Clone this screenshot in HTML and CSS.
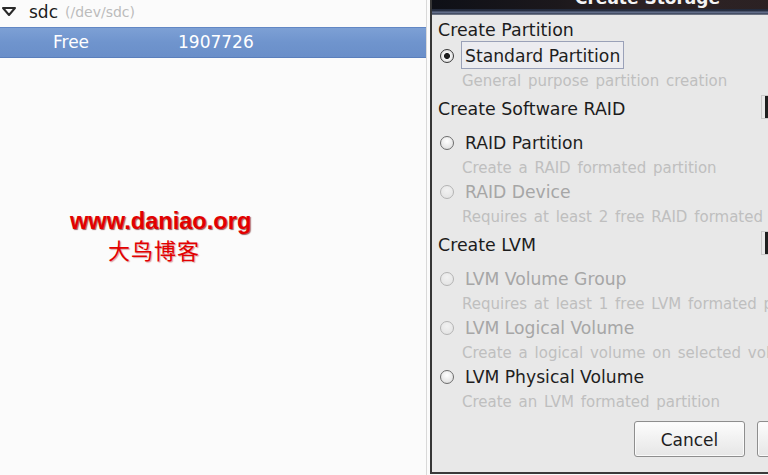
FILE: index.html
```html
<!DOCTYPE html>
<html>
<head>
<meta charset="utf-8">
<link rel="stylesheet" href="styles.css">
</head>
<body>
<div class="screen">
  <div class="tree">
    <div class="tree-list">
      <div class="row row-disk">
        <svg class="expander" width="14" height="9" viewBox="0 0 14 9"><polygon points="1,1 13,1 7,8" fill="#fff" stroke="#2a2a2a" stroke-width="2" stroke-linejoin="round"/></svg>
        <span class="disk">sdc</span><span class="path">(/dev/sdc)</span>
      </div>
      <div class="row row-sel">
        <span class="c-name">Free</span><span class="c-size">1907726</span>
      </div>
    </div>
  </div>
  <div class="dialog">
    <div class="titlebar"><span class="title">Create Storage</span></div>
    <div class="band"></div>
    <div class="content">
      <section class="group first">
        <div class="group-head"><span class="head-text">Create Partition</span></div>
        <div class="opt"><span class="radio on"></span><span class="label focus">Standard Partition</span></div>
        <div class="desc">General purpose partition creation</div>
      </section>
      <section class="group">
        <div class="group-head"><span class="head-text">Create Software RAID</span><span class="pic"></span></div>
        <div class="opt"><span class="radio"></span><span class="label">RAID Partition</span></div>
        <div class="desc">Create a RAID formated partition</div>
        <div class="opt disabled"><span class="radio"></span><span class="label">RAID Device</span></div>
        <div class="desc">Requires at least 2 free RAID formated partitions</div>
      </section>
      <section class="group">
        <div class="group-head"><span class="head-text">Create LVM</span><span class="pic"></span></div>
        <div class="opt disabled"><span class="radio"></span><span class="label">LVM Volume Group</span></div>
        <div class="desc">Requires at least 1 free LVM formated partition</div>
        <div class="opt disabled"><span class="radio"></span><span class="label">LVM Logical Volume</span></div>
        <div class="desc">Create a logical volume on selected volume group</div>
        <div class="opt"><span class="radio"></span><span class="label">LVM Physical Volume</span></div>
        <div class="desc">Create an LVM formated partition</div>
      </section>
      <div class="buttons">
        <button class="btn">Cancel</button>
        <button class="btn">Create</button>
      </div>
    </div>
  </div>
  <div class="watermark">
    <div class="wm-url">www.daniao.org</div>
    <div class="wm-cn">大鸟博客</div>
  </div>
</div>
</body>
</html>
```

FILE: styles.css
```css
html, body {
  margin: 0;
  padding: 0;
  width: 768px;
  height: 475px;
  overflow: hidden;
  background: #fafafa;
  font-family: "DejaVu Sans", sans-serif;
}

.screen {
  position: relative;
  display: flex;
  width: 768px;
  height: 475px;
  overflow: hidden;
}

/* left tree */
.tree {
  width: 430px;
  flex: none;
  background: #fbfbfb;
}
.tree-list {
  width: 426px;
  height: 475px;
  border-right: 1px solid #d9d9d9;
  background: #fbfbfb;
}
.row {
  display: flex;
  align-items: flex-start;
}
.row-disk {
  height: 27px;
  line-height: 24px;
  padding-left: 2px;
}
.expander {
  margin-top: 7px;
  flex: none;
}
.disk {
  margin-left: 13px;
  font-size: 17px;
  color: #1d1d1d;
}
.path {
  margin-left: 7px;
  font-size: 14px;
  color: #bcbcbc;
}
.row-sel {
  height: 29px;
  line-height: 29px;
  border-top: 1px solid #6287c4;
  border-bottom: 1px solid #5a7fbc;
  background: linear-gradient(#7da0d5, #6f94cd 50%, #6a8fc9);
  color: #fff;
  font-size: 17px;
  padding-left: 53px;
}
.c-name {
  width: 125px;
}

/* dialog */
.dialog {
  flex: none;
  width: 420px;
  height: 472px;
  border-left: 2px solid #363636;
  border-bottom: 2px solid #3a3a3a;
  background: #e8e8e8;
}
.titlebar {
  height: 9px;
  overflow: hidden;
  background: linear-gradient(90deg, #0e1017, #1c181c 30%, #2c2224 50%, #2b2123);
}
.title {
  display: block;
  margin-top: -10px;
  padding-left: 143px;
  font-size: 17px;
  font-weight: bold;
  line-height: 17px;
  color: #f4f4f4;
}
.band {
  height: 6px;
  background: linear-gradient(#20283a 0, #2a3245 2px, #6a7591 3px, #5a6581 4px, #30384a 5px, #a9afbd 6px);
}
.content {
  padding-top: 3px;
  padding-left: 6px;
}
.group {
  margin-bottom: 4px;
}
.group-head {
  display: grid;
  grid-template-columns: 323px 20px;
  height: 34px;
  font-size: 17.4px;
  line-height: 24px;
  color: #1c1c1c;
}
.group.first .group-head {
  height: 26px;
}
.pic {
  margin-top: -2px;
  height: 22px;
  border: 1px solid #c9c9c9;
  border-right: none;
  background: #e8e8e8;
  box-shadow: inset 3px 0 0 #e8e8e8, inset 20px 0 0 #1e1e1e;
}
.opt {
  display: flex;
  align-items: flex-start;
  height: 24px;
  font-size: 17.2px;
  line-height: 24px;
  color: #1e1e1e;
}
.radio {
  flex: none;
  box-sizing: border-box;
  width: 14px;
  height: 14px;
  margin: 5px 0 0 2px;
  border: 1px solid #6d6d6d;
  border-radius: 50%;
  background: radial-gradient(circle at 50% 35%, #ffffff, #e4e4e4 70%, #cfcfcf);
}
.radio.on {
  border-color: #3a3a3a;
  background: radial-gradient(circle, #1e1e1e 0, #1e1e1e 2.6px, #f6f6f6 3.4px, #e2e2e2 6px);
}
.label {
  margin: -3px 0 0 7px;
  padding: 2px 3px 0 3px;
  border: 1px solid transparent;
  white-space: nowrap;
}
.label.focus {
  border-color: #9aa1b8;
  background: #ececf0;
}
.disabled {
  color: #a6a6a6;
}
.disabled .radio {
  border-color: #b4b4b4;
  background: radial-gradient(circle at 50% 35%, #f2f2f2, #e4e4e4 80%);
}
.desc {
  height: 24px;
  padding-top: 1px;
  padding-left: 24px;
  font-size: 15px;
  word-spacing: 2px;
  line-height: 24px;
  color: #bfbfbf;
  white-space: nowrap;
}
.buttons {
  display: flex;
  gap: 12px;
  padding-left: 196px;
  margin-top: 7px;
}
.btn {
  box-sizing: border-box;
  width: 111px;
  height: 36px;
  border: 1px solid #8e8e8e;
  border-radius: 3px;
  background: linear-gradient(#fdfdfd, #f1f1f1 50%, #e6e6e6);
  box-shadow: inset 0 0 0 1px #fafafa;
  font-family: "DejaVu Sans", sans-serif;
  font-size: 17px;
  color: #1e1e1e;
  padding: 2px 0 0 0;
  flex: none;
}

/* watermark */
.watermark {
  position: absolute;
  left: 70px;
  top: 209px;
  color: #e30000;
}
.wm-url {
  font-family: "Liberation Sans", Arial, sans-serif;
  font-weight: bold;
  font-size: 23.6px;
  line-height: 24px;
  text-shadow: 1px 1px 1px #9a6060;
}
.wm-cn {
  margin-top: 4px;
  padding-left: 38px;
  font-family: "Noto Sans CJK SC", sans-serif;
  font-size: 22px;
  line-height: 24px;
  letter-spacing: 1px;
  text-shadow: 1px 1px 1px #d8a0a0;
}
```
